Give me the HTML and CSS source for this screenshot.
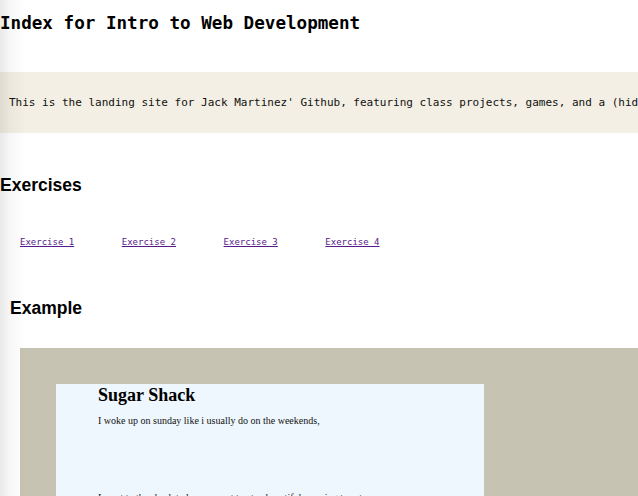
FILE: index.html
```html
<!DOCTYPE html>
<html lang="en">
<head>
<meta charset="utf-8">
<title>Index for Intro to Web Development</title>
<link rel="stylesheet" href="styles.css">
</head>
<body>
<div class="shade"></div>
<h1 class="title">Index for Intro to Web Development</h1>
<div class="intro">
  <p>This is the landing site for Jack Martinez' Github, featuring class projects, games, and a (hidden) surprise or two.</p>
</div>
<h2 class="section exercises-title">Exercises</h2>
<nav class="links">
  <a href="#">Exercise 1</a>
  <a href="#">Exercise 2</a>
  <a href="#">Exercise 3</a>
  <a href="#">Exercise 4</a>
</nav>
<h2 class="section example-title">Example</h2>
<div class="frame">
  <div class="story">
    <h2 class="story-title">Sugar Shack</h2>
    <p class="story-line">I woke up on sunday like i usually do on the weekends,</p>
    <p class="story-line second">I went to the shack to buy a sweet treat, a beautiful morning to eat.</p>
  </div>
</div>
</body>
</html>
```
FILE: styles.css
```css
html, body {
  margin: 0;
  padding: 0;
  background: #ffffff;
  overflow: hidden;
}
body {
  width: 638px;
  height: 496px;
  color: #000;
}
.shade {
  position: fixed;
  left: 0;
  top: 0;
  width: 26px;
  height: 100%;
  background: linear-gradient(to right, rgba(0,0,0,0.085), rgba(0,0,0,0.03) 10px, rgba(0,0,0,0) 26px);
  pointer-events: none;
  z-index: 10;
}
.title {
  font-family: "DejaVu Sans Mono", monospace;
  font-weight: bold;
  font-size: 17.6px;
  line-height: 22px;
  margin: 12px 0 0 0;
  white-space: nowrap;
}
.intro {
  margin-top: 38px;
  background: #f3efe4;
  padding: 24px 0 24px 9px;
  white-space: nowrap;
  overflow: hidden;
}
.intro p {
  margin: 0;
  font-family: "DejaVu Sans Mono", monospace;
  font-size: 11px;
  line-height: 13px;
  color: #111;
}
.section {
  font-family: "Liberation Sans", Arial, sans-serif;
  font-weight: bold;
  font-size: 17.5px;
  line-height: 20px;
  margin: 0;
}
.exercises-title {
  margin-top: 42px;
}
.links {
  display: flex;
  gap: 47.6px;
  padding-left: 20px;
  margin-top: 41.5px;
}
.links a {
  font-family: "DejaVu Sans Mono", monospace;
  font-size: 9px;
  line-height: 11px;
  color: #551a8b;
  text-decoration: underline;
}
.example-title {
  margin-top: 50.5px;
  padding-left: 10px;
}
.frame {
  margin: 30px 0 0 20px;
  background: #c6c3b2;
  padding: 36px 0 0 36px;
  height: 200px;
}
.story {
  width: 386px;
  background: #eff7fe;
  padding: 1px 0 0 42px;
  height: 200px;
  font-family: "Liberation Serif", "Times New Roman", serif;
}
.story-title {
  margin: 0;
  font-size: 18px;
  line-height: 20px;
  font-weight: bold;
}
.story-line {
  margin: 10px 0 0 0;
  font-size: 10px;
  line-height: 12px;
  color: #111;
}
.story-line.second {
  margin-top: 65px;
}
```
